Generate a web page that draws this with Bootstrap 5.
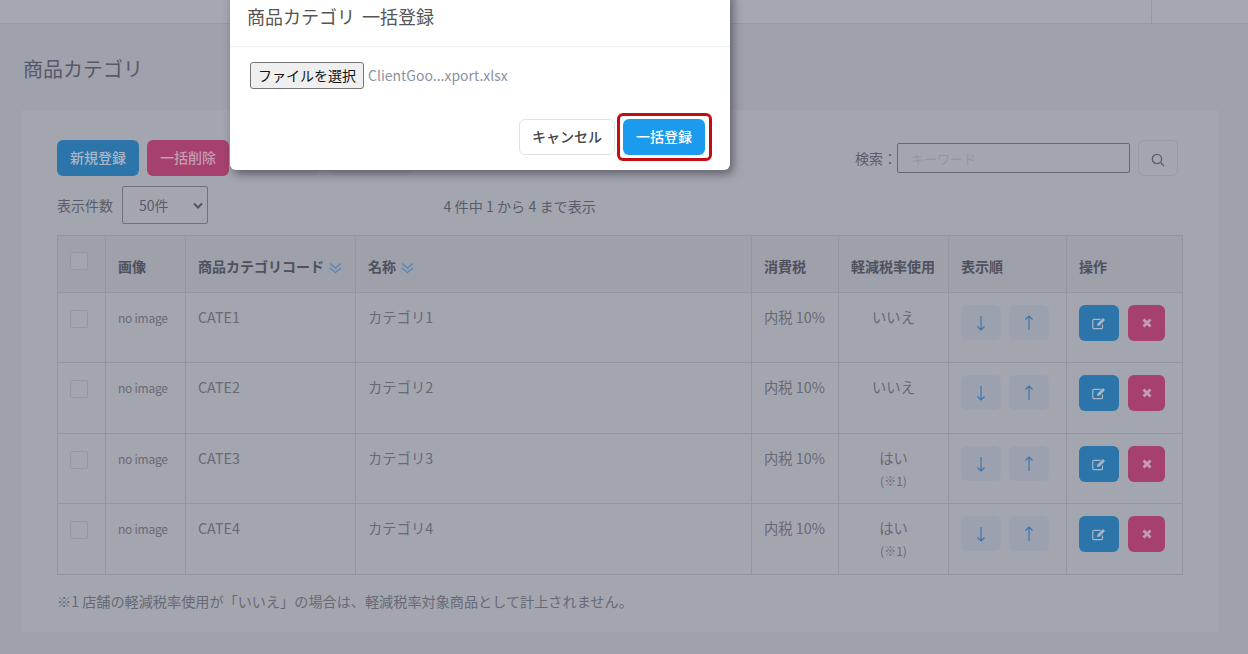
<!DOCTYPE html>
<html lang="ja">
<head>
  <meta charset="UTF-8" />
  <meta name="viewport" content="width=device-width, initial-scale=1.0"/>
  <title>商品カテゴリ</title>
  <link href="https://cdn.jsdelivr.net/npm/bootstrap@5.3.0/dist/css/bootstrap.min.css" rel="stylesheet" />
  <style>
    html, body {
      height: 654px;
      overflow: hidden;
    }
    body {
      background: #9fa1ad;
      color: #5a5c69;
      font-family: "Noto Sans CJK JP", "Noto Sans", sans-serif;
      font-size: 14px;
    }
    .top-strip {
      height: 24px;
      background: #a5a7b1;
      border-bottom: 1px solid #9698a5;
      padding-right: 96px;
    }
    .top-strip span {
      display: block;
      width: 1px;
      height: 23px;
      background: #9698a5;
    }
    .page-title {
      font-size: 20px;
      font-weight: 400;
      line-height: 30px;
      color: #575966;
      margin: 0;
      padding: 30px 0 26px 23px;
    }
    .panel-box {
      width: 1196px;
      height: 522px;
      margin-left: 22px;
      padding: 30px 35px 0;
      background: #a4a6af;
    }
    .tool-row { height: 36px; }
    .act-btn {
      height: 36px;
      padding: 0 0 2px;
      border: 0;
      border-radius: 6px;
      font-size: 14px;
      font-weight: 500;
      color: #aab6c6;
      width: 82px;
    }
    .act-blue { background: #2c75aa; }
    .act-pink { background: #a6416e; color: #c49db1; }
    .act-ghost { background: #a0a2ac; }
    .act-gap { margin-left: 3px; }
    .search-label { font-size: 14px; color: #5a5c69; margin-right: -8px; }
    .search-input {
      width: 233px;
      height: 30px;
      border: 1px solid #666875;
      border-radius: 2px;
      background: #a4a6af;
      padding: 0 13px;
      font-size: 13px;
    }
    .search-input::placeholder { color: #94969f; }
    .search-btn {
      width: 40px;
      height: 36px;
      padding: 0;
      border: 1px solid #989aa4;
      border-radius: 6px;
      background: #a4a6af;
      color: #5a5c69;
    }
    .search-wrap { margin-right: 5px; }
    .count-row { height: 38px; margin-top: 10px; font-size: 14px; }
    .count-label { margin-right: 9px; }
    .count-select {
      width: 86px;
      height: 38px;
      border: 1px solid #6f717d;
      border-radius: 2px;
      padding: 0 0 0 16px;
      background-color: #a4a6af;
      color: #5a5c69;
      display: flex;
      align-items: center;
      justify-content: space-between;
    }
    .count-text { width: 388px; text-align: right; padding-top: 3px; font-size: 14.15px; }
    .data-table {
      table-layout: fixed;
      width: 1126px;
      margin: 11px 0 0;
      font-size: 14.3px;
      --bs-table-bg: transparent;
      --bs-table-color: #676975;
      border-color: #9395a0;
    }
    .data-table > :not(caption) > * > * {
      padding: 13px 12px 0;
      border-color: #9395a0;
      color: #676975;
      box-shadow: none;
    }
    .data-table thead { vertical-align: top; }
    .data-table thead tr { height: 57px; }
    .data-table thead th {
      background: #9ea0aa;
      color: #4f515e;
      font-size: 14px;
      font-weight: 700;
      padding-top: 20px;
      white-space: nowrap;
    }
    .sort-mark { margin-left: 2px; }
    .data-table tbody td { line-height: 22px; }
    .data-table tbody tr:nth-child(1) { height: 70px; }
    .data-table tbody tr:nth-child(2) { height: 71px; }
    .data-table tbody tr:nth-child(3) { height: 70px; }
    .data-table tbody tr:nth-child(4) { height: 71px; }
    .data-table .no-img { font-size: 12px; padding-top: 14px; letter-spacing: -.02em; }
    .data-table .check-cell { padding: 17px 0 0 12px; }
    .data-table thead .check-cell { padding-top: 16px; }
    .fake-check {
      display: block;
      width: 18px;
      height: 18px;
      border: 1px solid #9597a1;
      border-radius: 2px;
      background: #a4a6af;
    }
    .small-note { display: block; font-size: 12px; line-height: 18px; margin-top: 3px; }
    .order-btn {
      width: 40px;
      height: 35px;
      border-radius: 6px;
      background: #9ba1af;
      color: #3a73a6;
      display: flex;
      align-items: center;
      justify-content: center;
    }
    .row-btn {
      height: 36px;
      border-radius: 6px;
      display: flex;
      align-items: center;
      justify-content: center;
    }
    .row-group { gap: 9px; }
    .row-edit { width: 40px; background: #2c75aa; }
    .row-del { width: 37px; background: #a6416e; }
    .data-table .btn-cell { padding-top: 12px; }
    .foot-note { font-size: 14.15px; color: #676975; margin: 16px 0 0; line-height: 20px; }

    /* dialog lying over the dimmed page */
    .upload-dialog {
      position: absolute;
      left: 230px;
      top: -10px;
      width: 500px;
      height: 180px;
      border: 0;
      border-radius: 6px;
      background: #fff;
      box-shadow: 3px 4px 10px rgba(40, 40, 50, .55);
    }
    .upload-dialog .modal-header {
      height: 57px;
      padding: 9px 17px 0;
      border-bottom: 1px solid #eceef0;
      align-items: flex-start;
    }
    .upload-dialog .modal-title {
      font-size: 18px;
      font-weight: 400;
      color: #555;
      line-height: 34px;
      word-spacing: 3px;
    }
    .upload-dialog .modal-body {
      height: 72px;
      flex: none;
      padding: 15px 20px 0;
    }
    .file-pick {
      width: 114px;
      height: 27px;
      padding: 0;
      background: #efefef;
      border: 1px solid #767676;
      border-radius: 3px;
      color: #111;
      font-size: 14px;
    }
    .file-name { font-size: 14px; color: #8b92a5; margin-left: 4px; line-height: 27px; }
    .upload-dialog .modal-footer {
      padding: 0 25px 0 0;
      border: 0;
      justify-content: flex-end;
      gap: 8px;
    }
    .upload-dialog .modal-footer > * { margin: 0; }
    .cancel-btn {
      width: 96px;
      height: 36px;
      padding: 0 0 2px;
      background: #fff;
      border: 1px solid #dfe3e8;
      border-radius: 6px;
      font-size: 14px;
      font-weight: 500;
      color: #444;
    }
    .submit-btn {
      width: 82px;
      height: 36px;
      padding: 0 0 2px;
      border: 0;
      border-radius: 6px;
      background: #1b9bee;
      color: #fff;
      font-size: 14px;
      font-weight: 500;
    }
    .red-mark {
      position: absolute;
      left: 387px;
      top: 123px;
      width: 95px;
      height: 48px;
      border: 3px solid #c40d12;
      border-radius: 6px;
      pointer-events: none;
    }
  </style>
</head>
<body>

<!-- Top bar -->
<div class="top-strip d-flex justify-content-end"><span></span></div>

<h1 class="page-title">商品カテゴリ</h1>

<div class="panel-box">
  <div class="tool-row d-flex align-items-start justify-content-between">
    <div class="d-flex gap-2">
      <button class="act-btn act-blue" type="button">新規登録</button>
      <button class="act-btn act-pink" type="button">一括削除</button>
      <button class="act-btn act-ghost" type="button"></button>
      <button class="act-btn act-ghost act-gap" type="button"></button>
    </div>
    <div class="d-flex align-items-center gap-2 search-wrap">
      <span class="search-label">検索：</span>
      <input class="search-input" type="text" placeholder="キーワード" />
      <button class="search-btn" type="button">
        <svg width="14" height="14" viewBox="0 0 16 16" fill="none" stroke="currentColor" stroke-width="1.5"><circle cx="6.8" cy="6.8" r="5.3"/><path d="M10.8 10.8 15 15"/></svg>
      </button>
    </div>
  </div>

  <div class="count-row d-flex align-items-center">
    <span class="count-label">表示件数</span>
    <div class="count-select">50件
      <svg class="me-1" width="10" height="7" viewBox="0 0 10 7" fill="none" stroke="#515360" stroke-width="2"><path d="M1 1.5 5 5.5 9 1.5"/></svg>
    </div>
    <div class="count-text">4 件中 1 から 4 まで表示</div>
  </div>

  <table class="table table-bordered data-table">
    <colgroup>
      <col style="width:48px"><col style="width:80px"><col style="width:170px"><col style="width:396px"><col style="width:87px"><col style="width:110px"><col style="width:118px"><col style="width:116px">
    </colgroup>
    <thead>
      <tr>
        <th class="check-cell"><span class="fake-check"></span></th>
        <th>画像</th>
        <th>商品カテゴリコード
          <svg class="sort-mark" width="13" height="12" viewBox="0 0 13 12" fill="none" stroke="#4f86bd" stroke-width="1.2"><path d="M1 1.5 6.5 6 12 1.5M1 6 6.5 10.5 12 6"/></svg>
        </th>
        <th>名称
          <svg class="sort-mark" width="13" height="12" viewBox="0 0 13 12" fill="none" stroke="#4f86bd" stroke-width="1.2"><path d="M1 1.5 6.5 6 12 1.5M1 6 6.5 10.5 12 6"/></svg>
        </th>
        <th>消費税</th>
        <th>軽減税率使用</th>
        <th>表示順</th>
        <th>操作</th>
      </tr>
    </thead>
    <tbody id="rows"></tbody>
  </table>

  <p class="foot-note">※1 店舗の軽減税率使用が「いいえ」の場合は、軽減税率対象商品として計上されません。</p>
</div>

<!-- Upload dialog -->
<div class="modal-content upload-dialog">
  <div class="modal-header">
    <h5 class="modal-title">商品カテゴリ 一括登録</h5>
  </div>
  <div class="modal-body d-flex align-items-start">
    <button class="file-pick" type="button">ファイルを選択</button>
    <span class="file-name">ClientGoo...xport.xlsx</span>
  </div>
  <div class="modal-footer">
    <button class="cancel-btn" type="button">キャンセル</button>
    <button class="submit-btn" type="button">一括登録</button>
  </div>
  <div class="red-mark"></div>
</div>

<script>
  const rows = [
    { code: 'CATE1', name: 'カテゴリ1', reduced: 'いいえ', note: false },
    { code: 'CATE2', name: 'カテゴリ2', reduced: 'いいえ', note: false },
    { code: 'CATE3', name: 'カテゴリ3', reduced: 'はい', note: true },
    { code: 'CATE4', name: 'カテゴリ4', reduced: 'はい', note: true }
  ];
  const down = '<svg width="12" height="16" viewBox="0 0 12 16" fill="none" stroke="currentColor" stroke-width="1.1"><path d="M6 1v14M2.5 11.5 6 15l3.5-3.5"/></svg>';
  const up = '<svg width="12" height="16" viewBox="0 0 12 16" fill="none" stroke="currentColor" stroke-width="1.1"><path d="M6 15V1M2.5 4.5 6 1l3.5 3.5"/></svg>';
  const edit = '<svg width="14" height="13" viewBox="0 0 14 13" fill="none" stroke="#aab6c6" stroke-width="1.2"><path d="M10.5 7.5v3a1.2 1.2 0 0 1-1.2 1.2H2A1.2 1.2 0 0 1 .8 10.5V3.5A1.2 1.2 0 0 1 2 2.3h6.5"/><path d="M5 9l.5-2.6L11 1l2 2-5.4 5.5z" fill="#aab6c6" stroke="none"/></svg>';
  const del = '<svg width="10" height="10" viewBox="0 0 10 10" fill="none" stroke="#c49db1" stroke-width="2.8"><path d="M1.5 1.5l7 7M8.5 1.5l-7 7"/></svg>';

  document.getElementById('rows').innerHTML = rows.map(r => `
    <tr>
      <td class="check-cell"><span class="fake-check"></span></td>
      <td class="no-img">no image</td>
      <td>${r.code}</td>
      <td>${r.name}</td>
      <td>内税 10%</td>
      <td class="text-center">${r.reduced}${r.note ? '<span class="small-note">(※1)</span>' : ''}</td>
      <td class="btn-cell"><div class="d-flex gap-2"><span class="order-btn">${down}</span><span class="order-btn">${up}</span></div></td>
      <td class="btn-cell"><div class="d-flex row-group"><span class="row-btn row-edit">${edit}</span><span class="row-btn row-del">${del}</span></div></td>
    </tr>`).join('');
</script>
<script src="https://cdn.jsdelivr.net/npm/bootstrap@5.3.0/dist/js/bootstrap.bundle.min.js"></script>
</body>
</html>
